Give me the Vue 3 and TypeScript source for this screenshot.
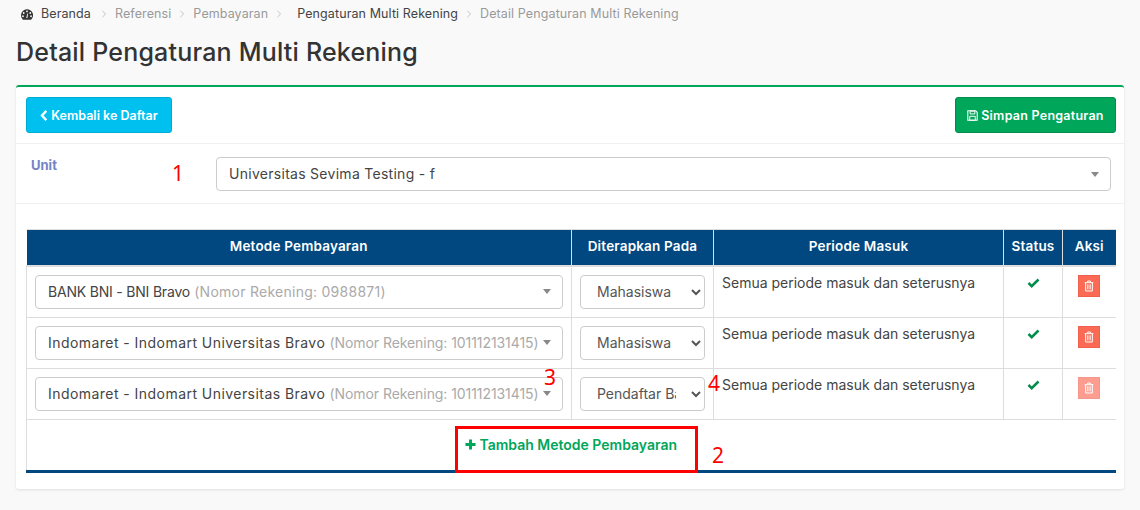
<script setup lang="ts">
interface Row {
  bank: string
  account: string
  target: string
  faded: boolean
  longNumber: boolean
}

const crumbs = [
  { label: 'Referensi', dark: false },
  { label: 'Pembayaran', dark: false },
  { label: 'Pengaturan Multi Rekening', dark: true },
  { label: 'Detail Pengaturan Multi Rekening', dark: false },
]

const rows: Row[] = [
  { bank: 'BANK BNI - BNI Bravo', account: '(Nomor Rekening: 0988871)', target: 'Mahasiswa', faded: false, longNumber: false },
  { bank: 'Indomaret - Indomart Universitas Bravo', account: '(Nomor Rekening: 101112131415)', target: 'Mahasiswa', faded: false, longNumber: true },
  { bank: 'Indomaret - Indomart Universitas Bravo', account: '(Nomor Rekening: 101112131415)', target: 'Pendaftar Baru', faded: true, longNumber: true },
]
</script>

<template>
  <div class="page">
    <nav class="crumbs">
      <svg class="gauge" viewBox="0 0 16 14" width="12" height="11">
        <path d="M8 0a8 8 0 0 0-8 8c0 2 .7 3.900 2 5.300l.7.700h10.600l.7-.7A8 8 0 0 0 8 0z" fill="#333" />
        <circle cx="8" cy="2.800" r="1.200" fill="#f9f9f9" />
        <circle cx="3.600" cy="5" r="1.200" fill="#f9f9f9" />
        <circle cx="12.400" cy="5" r="1.200" fill="#f9f9f9" />
        <circle cx="2.600" cy="9.300" r="1.200" fill="#f9f9f9" />
        <circle cx="13.400" cy="9.300" r="1.200" fill="#f9f9f9" />
        <path d="M7 11.500l1.500-6 1 .3-1 6z" fill="#f9f9f9" />
      </svg>
      <span class="crumb-home">Beranda</span>
      <template v-for="c in crumbs" :key="c.label">
        <svg class="sep" viewBox="0 0 6 10" width="6" height="8"><path d="M1 1l4 4-4 4" fill="none" stroke="#b5b5b5" stroke-width="1" /></svg>
        <span :class="c.dark ? 'crumb-dark' : 'crumb-muted'">{{ c.label }}</span>
      </template>
    </nav>

    <h1 class="title">Detail Pengaturan Multi Rekening</h1>

    <section class="card">
      <div class="card-head">
        <button class="btn btn-info" type="button">
          <svg viewBox="0 0 8 12" width="8" height="11"><path d="M6.500 1L1.800 6l4.700 5" fill="none" stroke="#fff" stroke-width="2.600" /></svg>
          Kembali ke Daftar
        </button>
        <button class="btn btn-success" type="button">
          <svg viewBox="0 0 14 14" width="11" height="11">
            <path d="M1 1h10l2 2v10H1z" fill="none" stroke="#fff" stroke-width="1.400" />
            <path d="M4 1.500h6v3.500H4zM3.500 8h7v5h-7z" fill="none" stroke="#fff" stroke-width="1.200" />
          </svg>
          Simpan Pengaturan
        </button>
      </div>

      <div class="unit-row">
        <label class="unit-label">Unit</label>
        <div class="fake-select unit-select">
          <span class="sel-text">Universitas Sevima Testing - f</span>
          <i class="caret"></i>
        </div>
      </div>

      <div class="table-wrap">
        <table class="grid">
          <colgroup>
            <col class="c1" /><col class="c2" /><col class="c3" /><col class="c4" /><col class="c5" />
          </colgroup>
          <thead>
            <tr>
              <th>Metode Pembayaran</th>
              <th>Diterapkan Pada</th>
              <th>Periode Masuk</th>
              <th>Status</th>
              <th>Aksi</th>
            </tr>
          </thead>
          <tbody>
            <tr v-for="(r, i) in rows" :key="i">
              <td>
                <div class="fake-select">
                  <span class="sel-text"><span :class="r.longNumber ? 'bank-long' : 'bank-short'">{{ r.bank }}</span> <span class="account" :class="{ 'long-number': r.longNumber }">{{ r.account }}</span></span>
                  <i class="caret"></i>
                </div>
              </td>
              <td>
                <select class="native">
                  <option>{{ r.target }}</option>
                </select>
              </td>
              <td class="period">Semua periode masuk dan seterusnya</td>
              <td class="center">
                <svg class="check" viewBox="0 0 13 10" width="13" height="10"><path d="M1.500 5l3.200 3.200L11.500 1.500" fill="none" stroke="#008d4c" stroke-width="2.500" /></svg>
              </td>
              <td class="center">
                <button class="trash" :class="{ faded: r.faded }" type="button" aria-label="Hapus">
                  <svg viewBox="0 0 12 14" width="10" height="12">
                    <path d="M4 2.500l.5-1.500h3l.5 1.500M.8 3h10.400M2 3v10h8V3" fill="none" stroke="#fff" stroke-width="1.200" />
                    <path d="M4.300 5v6M6 5v6M7.700 5v6" stroke="#fff" stroke-width=".9" />
                  </svg>
                </button>
              </td>
            </tr>
          </tbody>
          <tfoot>
            <tr>
              <td colspan="5" class="add-cell">
                <a class="add-link">
                  <svg viewBox="0 0 12 12" width="11" height="11"><path d="M6 .5v11M.5 6h11" stroke="#00a65a" stroke-width="3.200" /></svg>
                  Tambah Metode Pembayaran
                </a>
              </td>
            </tr>
          </tfoot>
        </table>
      </div>
    </section>

    <span class="note n1">1</span>
    <span class="note n2">2</span>
    <span class="note n3">3</span>
    <span class="note n4">4</span>
    <div class="red-box"></div>
  </div>
</template>

<style>
html, body { margin: 0; background: #f9f9f9; }
</style>

<style scoped>
.page {
  position: relative;
  width: 1140px;
  height: 510px;
  padding: 0 16px;
  box-sizing: border-box;
  overflow: hidden;
  background: #f9f9f9;
  font-family: Inter, "Open Sans", sans-serif;
  font-size: 14px;
  color: #444;
}
.crumbs {
  display: flex;
  align-items: center;
  height: 14px;
  padding: 7px 0 0 5px;
  font-size: 12.500px;
  line-height: 14px;
  letter-spacing: .1px;
}
.gauge { margin-right: 8px; }
.crumb-home { color: #444; margin-right: 2px; }
.crumb-dark { color: #444; margin-left: 7px; }
.crumb-muted { color: #999; }
.sep { margin: 0 8px; }
.title {
  margin: 16px 0 0;
  font-size: 25px;
  line-height: 30px;
  font-weight: 500;
  letter-spacing: .2px;
  color: #333;
}
.card {
  margin-top: 18px;
  height: 404px;
  box-sizing: border-box;
  background: #fff;
  border-top: 2px solid #00a65a;
  border-radius: 3px;
  box-shadow: 0 1px 3px rgba(0, 0, 0, .1);
}
.card-head {
  display: flex;
  justify-content: space-between;
  height: 57px;
  box-sizing: border-box;
  padding: 10px 8px 0 10px;
  border-bottom: 1px solid #f0f0f0;
}
.btn {
  display: inline-flex;
  align-items: center;
  justify-content: center;
  gap: 3px;
  height: 36px;
  padding: 0;
  border-radius: 3px;
  color: #fff;
  font: 600 12.500px Inter, "Open Sans", sans-serif;
}
.btn-info { width: 146px; background: #00c0ef; border: 1px solid #00acd6; }
.btn-success { width: 161px; background: #00a65a; border: 1px solid #008d4c; letter-spacing: .25px; }
.unit-row {
  display: flex;
  height: 60px;
  box-sizing: border-box;
  padding: 13px 13px 0 15px;
  border-bottom: 1px solid #f0f0f0;
}
.unit-label {
  width: 185px;
  font-weight: 700;
  font-size: 13px;
  line-height: 16px;
  color: #7383c7;
}
.fake-select {
  display: flex;
  align-items: center;
  justify-content: space-between;
  height: 34px;
  box-sizing: border-box;
  padding: 0 11px 1px 12px;
  border: 1px solid #ccc;
  border-radius: 4px;
  background: #fff;
  white-space: nowrap;
}
.unit-select { flex: 1; }
.sel-text { color: #444; letter-spacing: .28px; }
.bank-short { letter-spacing: -.2px; }
.bank-long { letter-spacing: .45px; }
.account { color: #aaa; letter-spacing: .26px; }
.account.long-number { letter-spacing: -.07px; }
.caret {
  flex: none;
  width: 0;
  height: 0;
  margin-top: 1px;
  border-left: 4px solid transparent;
  border-right: 4px solid transparent;
  border-top: 5px solid #888;
}
.table-wrap { padding: 25px 8px 0 10px; }
.grid {
  width: 1089px;
  table-layout: fixed;
  border-collapse: collapse;
  border-top: 1px solid #ddd;
}
.c1 { width: 545px; }
.c2 { width: 142px; }
.c3 { width: 290px; }
.c4 { width: 59px; }
.c5 { width: 53px; }
th {
  height: 36px;
  padding: 0 0 3px;
  box-sizing: border-box;
  background: #00487f;
  color: #fff;
  font-size: 13.500px;
  font-weight: 600;
  letter-spacing: .18px;
  text-align: center;
  border-left: 1px solid #ddd;
  border-bottom: 2px solid #ddd;
}
th:first-child { border-left: 0; }
tbody td {
  height: 51px;
  box-sizing: border-box;
  padding: 8px;
  vertical-align: top;
  border-left: 1px solid #ddd;
  border-bottom: 1px solid #ddd;
}
.native {
  display: block;
  width: 125px;
  height: 34px;
  padding: 0 12px;
  box-sizing: border-box;
  border: 1px solid #ccc;
  border-radius: 4px;
  background: #fff;
  color: #555;
  font: 14px Inter, "Open Sans", sans-serif;
}
.period { line-height: 16px; color: #444; }
.center { text-align: center; }
.check { display: block; margin: 3px auto 0; }
.trash {
  display: block;
  width: 22px;
  height: 22px;
  margin: 0 auto;
  padding: 0;
  background: #fb6a55;
  border: 1px solid #f0604c;
  line-height: 0;
}
.trash.faded { opacity: .65; }
.add-cell {
  height: 52px;
  box-sizing: border-box;
  padding: 15px 0 0;
  vertical-align: top;
  text-align: center;
  border-left: 1px solid #ddd;
  border-bottom: 3px solid #00487f;
}
.add-link {
  display: inline-flex;
  align-items: center;
  gap: 3px;
  color: #00a65a;
  font-weight: 600;
  font-size: 14px;
  line-height: 20px;
}
.note {
  position: absolute;
  color: #f00;
  font-family: "Noto Sans", sans-serif;
  font-size: 21px;
  line-height: 24px;
}
.n1 { left: 172px; top: 161px; }
.n2 { left: 712px; top: 443px; }
.n3 { left: 544px; top: 365px; }
.n4 { left: 708px; top: 371px; }
.red-box {
  position: absolute;
  left: 455px;
  top: 426px;
  width: 243px;
  height: 47px;
  box-sizing: border-box;
  border: 3px solid #f00;
}
</style>
